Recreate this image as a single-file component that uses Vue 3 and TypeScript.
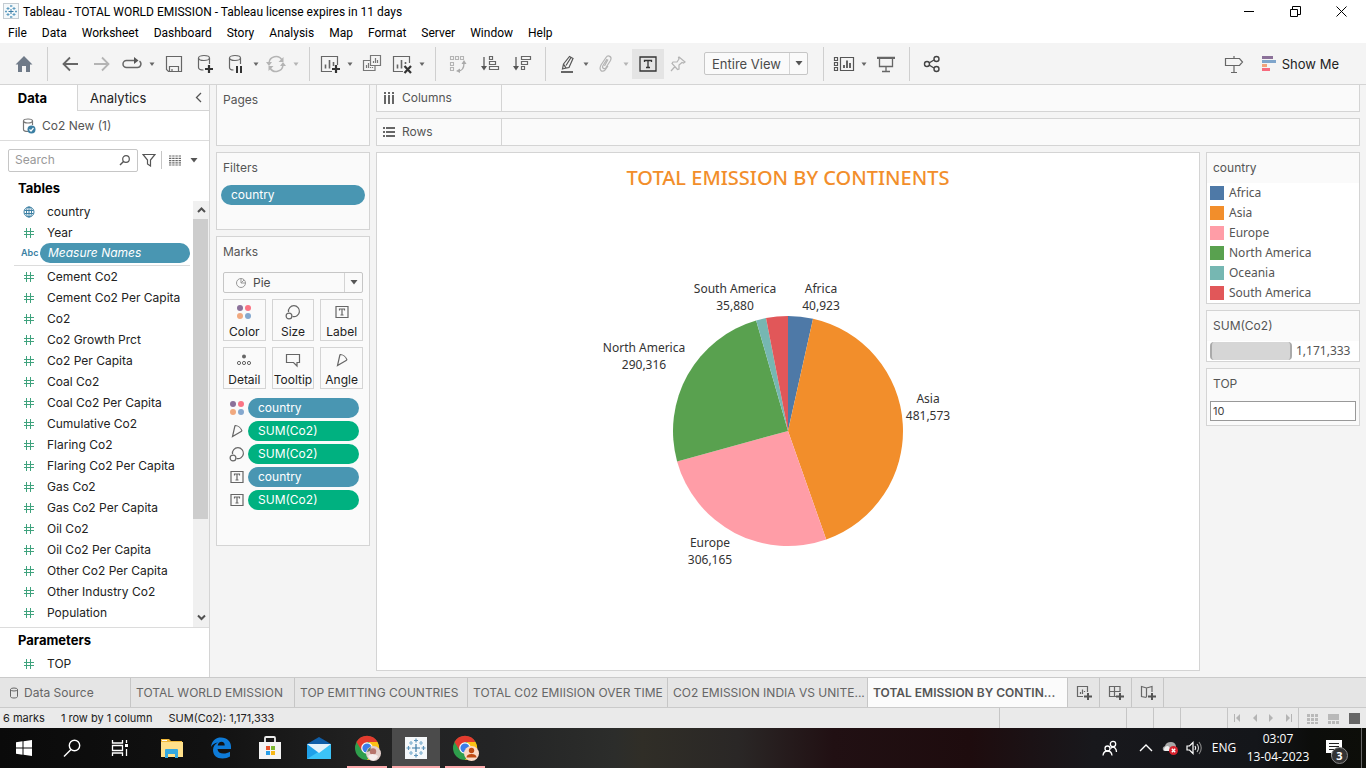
<script setup lang="ts">
import { h, ref } from 'vue'

const G = '#666666'
const icons: Record<string, string> = {
  logo: `<rect x=".5" y=".5" width="15" height="15" fill="#f4f8fa" stroke="#c4ccd2"/><g stroke="#3a7ca5"><path d="M8 6v5M5.500 8.500h5"/><path stroke="#5f9cc0" d="M8 2v2M7 3h2.500M8 13v2M7 14h2.500M3 7.500v2M2 8.500h2M13 7.500v2M12 8.500h2M5 4v3M3.500 5.500h3M11 4v3M9.500 5.500h3M5 10v3M3.500 11.500h3M11 10v3M9.500 11.500h3"/></g>`,
  home: `<path fill="#6f7a88" d="M10 2 18.500 10.500H16V18H12V12H8V18H4V10.500H1.500Z"/>`,
  back: `<path stroke="#666" stroke-width="1.800" d="M18 10H3M10 3.500 3.500 10l6.500 6.500"/>`,
  forward: `<path stroke="#b4b4b4" stroke-width="1.800" d="M2 10h15M10 3.500 16.500 10 10 16.500"/>`,
  replay: `<path stroke="#666" stroke-width="1.500" d="M7 6.500H4.500a3.500 3.500 0 0 0 0 7h11a3.500 3.500 0 0 0 2-6.300M6 6.500h8"/><path fill="#555" d="m12 3 4.500 3.500-4.500 3.500z"/>`,
  save: `<path stroke="#666" stroke-width="1.200" d="M2.500 2.500h15v15h-13l-2-2zM5.500 17.500v-5h9v5M8 17.500v-2.500"/>`,
  dbadd: `<path stroke="#666" stroke-width="1.200" d="M2.500 4v9.500c0 1.500 2 2.500 5 2.500M13.500 4v6"/><ellipse cx="8" cy="4" rx="5.500" ry="2.500" stroke="#666" stroke-width="1.200"/><path stroke="#333" stroke-width="2.200" d="M9 15h8M13 11v8"/>`,
  dbpause: `<path stroke="#666" stroke-width="1.200" d="M3.500 4v9.500c0 1.500 1 2.500 4 2.500M14.500 4v6"/><ellipse cx="9" cy="4" rx="5.500" ry="2.500" stroke="#666" stroke-width="1.200"/><path stroke="#333" stroke-width="2" d="M11 12v7M15 12v7"/>`,
  refresh: `<path stroke="#b4b4b4" stroke-width="1.500" d="M3 9a7 7 0 0 1 13-3M17 11a7 7 0 0 1-13 3"/><path fill="#b4b4b4" d="M17.500 3v5h-5zM2.500 17v-5h5zM0 8h6l-3 4zM14 12h6l-3-4z"/>`,
  sheetadd: `<path stroke="#666" stroke-width="1.200" d="M17.500 11V2.500H1.500v15H12"/><path stroke="#666" stroke-width="1.600" d="M5.500 14.500v-4M9.500 14.500V6M13.500 12V8"/><path stroke="#333" stroke-width="2.200" d="M12 15h8M16 11v8"/>`,
  sheetdup: `<path stroke="#777" stroke-width="1.200" d="M8.500 1.500h10v10h-10zM8 6.500H1.500v10H13V12M11.500 9V7M13.500 9V4M15.500 9V6M4.500 14v-3M6.500 14v-5M8.500 14v-1M10.500 14v-1"/>`,
  sheetclear: `<path stroke="#666" stroke-width="1.200" d="M17.500 9V2.500H1.500v15H11"/><path stroke="#666" stroke-width="1.600" d="M5.500 14.500v-4M9.500 14.500V6M13.500 10V8"/><path stroke="#333" stroke-width="2.200" d="m12.500 12 6.500 7M19 12l-6.500 7"/>`,
  swap: `<path stroke="#b4b4b4" stroke-width="1.100" d="M2.500 2.500h3v3h-3zM7.500 2.500h3v3h-3zM12.500 2.500h3v3h-3zM2.500 8.500h3v3h-3zM2.500 13.500h3v3h-3z"/><path stroke="#aaa" stroke-width="1.300" d="M10 17c4 0 6-3 6-8"/><path fill="#aaa" d="m16 6 2.500 4h-5zM8 17l4-2.500V19z"/>`,
  sortasc: `<path stroke="#666" stroke-width="1.400" d="M4 3v11"/><path fill="#555" d="M1 12h6l-3 4.500z"/><path stroke="#666" stroke-width="1.200" d="M9.500 2.500h3v3h-3zM9.500 7.500h6v3h-6zM9.500 12.500h9v3h-9z"/>`,
  sortdesc: `<path stroke="#666" stroke-width="1.400" d="M4 3v11"/><path fill="#555" d="M1 12h6l-3 4.500z"/><path stroke="#666" stroke-width="1.200" d="M9.500 2.500h9v3h-9zM9.500 7.500h6v3h-6zM9.500 12.500h3v3h-3z"/>`,
  pen: `<path stroke="#555" stroke-width="1.200" d="m7.500 10 6-7.500 3.500 2-4 9-3 .5zM7.500 10l-1 5 3.500-1M15 3.500l-5 8"/><path fill="#666" d="M5 17h12v2H5z"/>`,
  clip: `<path stroke="#b4b4b4" stroke-width="1.200" d="m11 5-4 6.500c-1.500 3 1.500 4 3 2l4.500-7c2-4-2.500-6-4.500-3L5 11c-2.500 5 1 8 4 5l3-4M12 5.500 8.500 12"/>`,
  label: `<path stroke="#333" stroke-width="1.300" d="M2 3h16v14H2z"/><path stroke="#333" stroke-width="1.300" d="M6.500 8V6.500h7V8M10 6.500v7M8 13.500h4"/>`,
  pin: `<path stroke="#b4b4b4" stroke-width="1.200" d="m11 3 6 5-1.500 1-1.500-.5-3 2.500v4l-1.500.5L4 9.500 5 8h4l2-3-.5-1.500zM7 12.500 3 17"/>`,
  cards: `<path stroke="#555" stroke-width="1.200" d="M1.500 3.500h3v3h-3zM1.500 8.500h3v3h-3zM1.500 13.500h3v3h-3zM7.500 3.500h13v13h-13z"/><path stroke="#555" stroke-width="1.800" d="M11 14v-3M14 14V6.500M17 14V9"/>`,
  present: `<path stroke="#666" stroke-width="1.300" d="M1 3.500h18M3.500 4v8.500h13V4M10 13v4M6 17.500h8"/><path stroke="#666" d="M1 4.500h18"/>`,
  share: `<g stroke="#444" stroke-width="1.400"><circle cx="5" cy="10" r="2.500"/><circle cx="14.500" cy="5" r="2.500"/><circle cx="14.500" cy="15" r="2.500"/><path d="m7 9 5-3M7 11l5 3"/></g>`,
  sign: `<path stroke="#666" stroke-width="1.200" d="M1.500 4.500h14l3 3.500-3 3.500h-14zM10 2v2.500M10 11.500V18M7 18.500h6"/>`,
  showme: `<path fill="#8b7199" d="M0 0h11v3H0z"/><path fill="#7fa5cb" d="M0 4h14v3H0z"/><path fill="#f1a37b" d="M0 8h5v3H0z"/><path fill="#f76b7e" d="M0 12h8v3H0z"/>`,
  caret: `<path fill="#666" d="M1.500 1.500h5L4 5z"/>`,
  caretoff: `<path fill="#b4b4b4" d="M1.500 1.500h5L4 5z"/>`,
  caretbig: `<path fill="#555" d="M.5 0h7L4 4.500z"/>`,
  db: `<path stroke="#777" stroke-width="1.200" d="M1.500 3v8.500c0 1 1.500 2 4.500 2M10.500 3v4"/><ellipse cx="6" cy="3" rx="4.500" ry="2" stroke="#777" stroke-width="1.200"/><circle cx="9.500" cy="11.500" r="4" fill="#3b7fa3"/><path stroke="#fff" stroke-width="1.200" d="m7.500 11.500 1.500 1.500 2.500-3"/>`,
  search: `<circle cx="7" cy="4" r="3.300" stroke="#555" stroke-width="1.200"/><path stroke="#555" stroke-width="1.500" d="M4.500 6.500 1 10"/>`,
  funnel: `<path stroke="#555" stroke-width="1.200" d="M1 1.500h12L8.500 7v6L5.500 11V7z"/>`,
  grid: `<path stroke="#666" stroke-width="1.200" stroke-dasharray="2.400 .8" d="M0 1h12M0 3.300h12M0 5.600h12M0 7.900h12M0 10h12"/>`,
  globe: `<g stroke="#3b7fa3"><circle cx="6" cy="6" r="5"/><ellipse cx="6" cy="6" rx="2.500" ry="5"/><path d="M1.500 4.500h9M1.500 7.500h9M6 1v10"/></g>`,
  hash: `<path stroke="#3fa27d" d="M3.500 1v10M7.500 1v10M1 4.500h10M1 7.500h10"/>`,
  cols: `<path fill="${G}" d="M1 1h2v2H1zM1 4h2v9H1zM5 1h2v2H5zM5 4h2v9H5zM9 1h2v2H9zM9 4h2v9H9z"/>`,
  rows: `<path fill="${G}" d="M0 1h2v2H0zM3 1h9v2H3zM0 5h2v2H0zM3 5h9v2H3zM0 9h2v2H0zM3 9h9v2H3z"/>`,
  pie: `<circle cx="6" cy="6" r="4.500" stroke="#999"/><path stroke="#999" d="M6 1.500V6h4.500M6 6l3-3"/>`,
  color: `<circle cx="4" cy="4" r="3" fill="#8b7199"/><circle cx="12" cy="4" r="3" fill="#fb7484"/><circle cx="4" cy="12" r="3" fill="#f1a97f"/><circle cx="12" cy="12" r="3" fill="#85a8ce"/>`,
  size: `<g stroke="${G}" stroke-width="1.200"><path d="M3.500 8a5.500 5.500 0 1 1 4 4.500"/><circle cx="4" cy="12" r="2.900"/></g>`,
  text: `<path stroke="${G}" stroke-width="1.200" d="M2 2.500h12v11H2z"/><path stroke="${G}" stroke-width="1.200" d="M5.500 6.500V5h5v1.500M8 5v6M6.500 11h3"/>`,
  detail: `<circle cx="8" cy="4.500" r="2" fill="${G}"/><g stroke="${G}"><circle cx="3" cy="11" r="1.600"/><circle cx="8" cy="11" r="1.600"/><circle cx="13" cy="11" r="1.600"/></g>`,
  tooltip: `<path stroke="${G}" stroke-width="1.200" d="M1.500 2.500h13v8H12V14l-3.500-3.500h-7z"/>`,
  angle: `<path stroke="${G}" stroke-width="1.200" d="M6 2.500 3.500 13.500 13 8M6 2.500c3 0 6 2.500 7 5.500"/>`,
  source: `<path stroke="#666" d="M1.500 2.500v7c0 2 7 2 7 0v-7"/><ellipse cx="5" cy="2.500" rx="3.500" ry="1.500" stroke="#666"/>`,
  newsheet: `<path stroke="#666" stroke-width="1.200" d="M11.500 7V1.500h-10v10H7M4.500 9V7M6.500 9V4.500M8.500 7V6"/><path stroke="#555" stroke-width="2" d="M8 11.500h8M12 8v7"/>`,
  newdash: `<path stroke="#666" stroke-width="1.200" d="M12 7V1.500H1.500v10H8M6.500 1.500v10M1.500 6.500H12"/><path stroke="#555" stroke-width="2" d="M8 11.500h8M12 8v7"/>`,
  newstory: `<path stroke="#666" stroke-width="1.200" d="M12 7V1.500L6.500 3 1.500 1.500v10l5 1M6.500 3v9"/><path stroke="#555" stroke-width="2" d="M8 11.500h8M12 8v7"/>`,
  first: `<path fill="#b4b4b4" d="M1 2h1v8H1zM7 2v8L3 6z"/>`,
  prev: `<path fill="#b4b4b4" d="M8 2v8L4 6z"/>`,
  next: `<path fill="#b4b4b4" d="M4 2v8l4-4z"/>`,
  last: `<path fill="#b4b4b4" d="M10 2h1v8h-1zM5 2v8l4-4z"/>`,
  tiles: `<path fill="#b9b9b9" d="M0 1h3v3H0zM4 1h3v3H4zM8 1h3v3H8zM0 5h3v3H0zM4 5h3v3H4zM8 5h3v3H8zM0 9h3v2H0zM4 9h3v2H4zM8 9h3v2H8z"/>`,
  film: `<path fill="#b9b9b9" d="M0 1h11v6H0zM0 8h3v3H0zM4 8h3v3H4zM8 8h3v3H8z"/>`,
  single: `<path fill="#666" d="M0 0h11v11H0z"/>`,
  win: `<path fill="#fff" d="m4 6.300 6.500-1v6.200H4zM11.500 5.200 20 4v7.500h-8.500zM4 12.500h6.500v6.200L4 17.700zM11.500 12.500H20V20l-8.500-1.200z"/>`,
  tsearch: `<circle cx="14.500" cy="9.500" r="5.200" stroke="#fff" stroke-width="1.400"/><path stroke="#fff" stroke-width="1.400" d="M11 13.500 4 20.500"/>`,
  taskview: `<path stroke="#fff" stroke-width="1.300" d="M4.500 4v3h10V4M4.500 20v-3h10v3M4.500 9.500h10v5h-10zM18.500 4v3M18.500 13v7"/><path fill="#fff" d="M17 8h3v3h-3z"/>`,
  folder: `<path fill="#f0b83a" d="M1 3h8l2 2h11v3H1z"/><path fill="#ffe08a" d="M1 6h22v15H1z"/><path fill="#35a9e0" d="M5 14q0-1 1-1h11q1 0 1 1v8h-3v-4H8v4H5z"/><path fill="#fff" d="M2 4h5v1H2z"/>`,
  edge: `<path fill="#0e7bd8" d="M2 11C3 4 7 1.500 12 1.500c6 0 10 4 10 9V13H8.500c.3 3 2.500 4.500 6 4.500 2.500 0 4.500-.7 6.500-1.800v4.800c-2 1.200-4.500 2-7.500 2C7.500 22.500 4 19 4 14c0-3.500 2-6 5-7.500C5.500 7 3.500 8.500 2 11zM8.700 9.500h7C15.800 7 14.500 5.800 12.500 5.800S9 7.200 8.700 9.500z"/>`,
  store: `<path stroke="#eee" stroke-width="1.800" d="M7 6V2q0-1 1-1h8q1 0 1 1v4"/><path fill="#f4f4f4" d="M1 6h22v17H1z"/><path fill="#e8532b" d="M8 10h4v4H8z"/><path fill="#7db72f" d="M13 10h4v4h-4z"/><path fill="#2a9fe8" d="M8 15h4v4H8z"/><path fill="#f8b817" d="M13 15h4v4h-4z"/>`,
  mail: `<path fill="#0f5ea8" d="M0 8 12 1l12 7v3H0z"/><path fill="#1fa0e8" d="M0 8v15h24V8z"/><path fill="#3cc3f7" d="M24 8v15H0z"/><path fill="#e4f2fa" d="m0 8 12 9L24 8z"/>`,
  chrome: `<circle cx="12" cy="13" r="12" fill="#2f9e4c"/><path fill="#e33b2e" d="M1.500 7A12 12 0 0 1 22.500 7H12L7 16z"/><path fill="#fbc116" d="M22.500 7A12 12 0 0 1 12 25l6-9L14 7z"/><circle cx="12" cy="13" r="5.800" fill="#fff"/><circle cx="12" cy="13" r="4.600" fill="#3b7de9"/>`,
  face: `<circle cx="18.500" cy="18.500" r="7.500" fill="#e3cfcb"/><circle cx="18" cy="16.500" r="3.200" fill="#b8746c"/><path fill="#f6eeee" d="M13 21q4-4 10 0-2 4.500-5 4.500T13 21z"/><path fill="#5d7f55" d="M12 17q1-4 4-5l-1 4z"/>`,
  user: `<circle cx="18.500" cy="18.500" r="7.500" fill="#fbd9c6"/><circle cx="18.500" cy="15.500" r="2.700" fill="#bf4a12"/><path fill="#bf4a12" d="M13.500 22.500q0-3.500 5-3.500t5 3.500z"/>`,
  tabtask: `<path fill="#f5f8fa" d="M1 1h22v22H1z"/><g stroke="#3979a5" stroke-width="1.200"><path d="M12 8v8M8 12h8"/><g stroke="#5b93ba"><path d="M12 2.500v4M10 4.500h4M12 17.500v4M10 19.500h4M4.500 10v4M2.500 12h4M19.500 10v4M17.500 12h4"/></g><g stroke="#7fb0cf"><path d="M7 5v4M5 7h4M17 5v4M15 7h4M7 15v4M5 17h4M17 15v4M15 17h4"/></g></g>`,
  people: `<g stroke="#fff" stroke-width="1.300"><circle cx="11" cy="4" r="2.700"/><path d="M8.500 8.500Q11 6 13 8q1.500 1.500 1.500 4"/><circle cx="5.500" cy="8.500" r="2.500"/><path d="M1 15.500q.5-4.500 4.500-4.500t4.500 4.500"/></g>`,
  up: `<path stroke="#fff" stroke-width="1.400" d="m2 11 6-6 6 6"/>`,
  cloud: `<path fill="#a8a8a8" d="M1 10q-1-3 2-4 1-4 6-4 4 0 5 4v5H2z"/><path fill="#eee" d="M2 10q0-4 4-4l6 5H3z"/><circle cx="11.500" cy="10.500" r="4.500" fill="#d8222e"/><path stroke="#fff" stroke-width="1.400" d="m9.800 8.800 3.400 3.400M13.200 8.800l-3.400 3.400"/>`,
  volume: `<path stroke="#fff" stroke-width="1.200" d="M1 6h2.500L7 2.500v11L3.500 10H1zM9 6q1.500 2 0 4"/><path stroke="#ccc" stroke-width="1.100" d="M11 4q3 4 0 8"/><path stroke="#888" stroke-width="1.100" d="M13 2q4.500 6 0 12"/>`,
  note: `<path fill="#fff" d="M0 0h16v13H9l-4 4v-4H0z"/><path stroke="#222" stroke-width="1.200" d="M3 3.500h10M3 6.500h10M3 9.500h8"/>`,
  minimize: `<path stroke="#000" d="M0 5.500h10"/>`,
  restore: `<path stroke="#000" d="M.5 3.500h7v7h-7zM2.500 3V.5h8v8H8"/>`,
  close: `<path stroke="#000" d="m.5.500 10 10M10.500.500l-10 10"/>`,
  chevleft: `<path stroke="#555" stroke-width="1.300" d="M6 1 1.500 5.500 6 10"/>`,
  sbup: `<path stroke="#505050" stroke-width="2" d="M1 6 4.500 2.500 8 6"/>`,
  sbdown: `<path stroke="#505050" stroke-width="2" d="M1 1.500 4.500 5 8 1.500"/>`,
}

interface IconProps { name: string; w?: number; h?: number }
const Icon = (p: IconProps) => {
  const w = p.w ?? 20
  const ht = p.h ?? w
  return h('svg', { width: w, height: ht, viewBox: `0 0 ${w} ${ht}`, fill: 'none', 'aria-hidden': 'true', innerHTML: icons[p.name] })
}
Icon.props = ['name', 'w', 'h']

const menus = ['File', 'Data', 'Worksheet', 'Dashboard', 'Story', 'Analysis', 'Map', 'Format', 'Server', 'Window', 'Help']

interface Tool { icon: string; label: string; split?: 'caret' | 'caretoff' }
const toolGroups: Tool[][] = [
  [
    { icon: 'back', label: 'Undo' }, { icon: 'forward', label: 'Redo' },
    { icon: 'replay', label: 'Replay', split: 'caret' }, { icon: 'save', label: 'Save' },
    { icon: 'dbadd', label: 'New data source' }, { icon: 'dbpause', label: 'Pause updates', split: 'caret' },
    { icon: 'refresh', label: 'Refresh', split: 'caretoff' },
  ],
  [
    { icon: 'sheetadd', label: 'New worksheet', split: 'caret' }, { icon: 'sheetdup', label: 'Duplicate' },
    { icon: 'sheetclear', label: 'Clear sheet', split: 'caret' },
  ],
  [{ icon: 'swap', label: 'Swap' }, { icon: 'sortasc', label: 'Sort ascending' }, { icon: 'sortdesc', label: 'Sort descending' }],
]

const measures = ['Cement Co2', 'Cement Co2 Per Capita', 'Co2', 'Co2 Growth Prct', 'Co2 Per Capita', 'Coal Co2', 'Coal Co2 Per Capita',
  'Cumulative Co2', 'Flaring Co2', 'Flaring Co2 Per Capita', 'Gas Co2', 'Gas Co2 Per Capita', 'Oil Co2', 'Oil Co2 Per Capita',
  'Other Co2 Per Capita', 'Other Industry Co2', 'Population']

const markButtons = [['color', 'Color'], ['size', 'Size'], ['text', 'Label'], ['detail', 'Detail'], ['tooltip', 'Tooltip'], ['angle', 'Angle']]
const markPills = [
  { icon: 'color', text: 'country', dim: true }, { icon: 'angle', text: 'SUM(Co2)', dim: false },
  { icon: 'size', text: 'SUM(Co2)', dim: false }, { icon: 'text', text: 'country', dim: true },
  { icon: 'text', text: 'SUM(Co2)', dim: false },
]

interface Slice { name: string; value: number; color: string; label?: [number, number] }
const slices: Slice[] = [
  { name: 'Africa', value: 40923, color: '#4e79a7', label: [253, 42] },
  { name: 'Asia', value: 481573, color: '#f28e2b', label: [360, 152] },
  { name: 'Europe', value: 306165, color: '#ff9da7', label: [142, 296] },
  { name: 'North America', value: 290316, color: '#59a14f', label: [76, 101] },
  { name: 'Oceania', value: 16476, color: '#76b7b2' },
  { name: 'South America', value: 35880, color: '#e15759', label: [167, 42] },
]
const total = slices.reduce((s, d) => s + d.value, 0)
const CX = 220, CY = 180, R = 115
let turn = 0
const wedges = slices.map((d) => {
  const a = turn * 2 * Math.PI
  turn += d.value / total
  const b = turn * 2 * Math.PI
  const at = (t: number) => `${(CX + R * Math.sin(t)).toFixed(2)} ${(CY - R * Math.cos(t)).toFixed(2)}`
  return { ...d, path: `M${CX} ${CY}L${at(a)}A${R} ${R} 0 ${b - a > Math.PI ? 1 : 0} 1 ${at(b)}Z` }
})
const fmt = (n: number) => n.toLocaleString('en-US')

const sheets = ['TOTAL WORLD EMISSION', 'TOP EMITTING COUNTRIES', 'TOTAL C02 EMIISION OVER TIME', 'CO2 EMISSION INDIA VS UNITE...', 'TOTAL EMISSION BY CONTIN...']
const active = ref(sheets[4])
const fit = ref('Entire View')
const mark = ref('Pie')
const top = ref('10')
const query = ref('')
const apps = [['folder', 'File Explorer'], ['edge', 'Edge'], ['store', 'Store'], ['mail', 'Mail']]
</script>

<template>
  <div class="app">
    <header class="titlebar">
      <Icon name="logo" :w="17" />
      <span class="wtitle">Tableau - TOTAL WORLD EMISSION - Tableau license expires in 11 days</span>
      <button class="wbtn" aria-label="Minimize"><Icon name="minimize" :w="11" /></button>
      <button class="wbtn" aria-label="Restore"><Icon name="restore" :w="11" /></button>
      <button class="wbtn" aria-label="Close"><Icon name="close" :w="11" /></button>
    </header>
    <nav class="menubar">
      <button v-for="m in menus" :key="m">{{ m }}</button>
    </nav>

    <div class="toolbar">
      <div class="group first"><button class="tool" aria-label="Home"><Icon name="home" /></button></div>
      <div v-for="(g, i) in toolGroups" :key="i" class="group">
        <template v-for="t in g" :key="t.icon">
          <button class="tool" :class="{ split: t.split }" :aria-label="t.label"><Icon :name="t.icon" /></button>
          <button v-if="t.split" class="more" :aria-label="t.label + ' options'"><Icon :name="t.split" :w="8" :h="6" /></button>
        </template>
      </div>
      <div class="group wide">
        <button class="tool split" aria-label="Highlight"><Icon name="pen" /></button>
        <button class="more" aria-label="Highlight options"><Icon name="caret" :w="8" :h="6" /></button>
        <button class="tool split" aria-label="Group members"><Icon name="clip" /></button>
        <button class="more" aria-label="Group options"><Icon name="caretoff" :w="8" :h="6" /></button>
        <button class="tool on" aria-label="Show mark labels"><Icon name="label" /></button>
        <button class="tool split" aria-label="Fix axes"><Icon name="pin" /></button>
        <div class="drop fit">
          <select v-model="fit" aria-label="Fit"><option>Entire View</option><option>Standard</option></select>
          <span class="arrow"><Icon name="caretbig" :w="8" :h="5" /></span>
        </div>
      </div>
      <div class="group">
        <button class="tool split" aria-label="Show cards"><Icon name="cards" :w="22" :h="20" /></button>
        <button class="more" aria-label="Card options"><Icon name="caret" :w="8" :h="6" /></button>
        <button class="tool" aria-label="Presentation mode"><Icon name="present" /></button>
      </div>
      <div class="group end"><button class="tool" aria-label="Share"><Icon name="share" /></button></div>
      <button class="tool guide" aria-label="Guide"><Icon name="sign" /></button>
      <button class="showme"><Icon name="showme" :w="14" :h="15" />Show Me</button>
    </div>

    <main class="work">
      <aside class="data">
        <div class="dtabs">
          <button class="dtab sel">Data</button>
          <button class="dtab">Analytics<Icon name="chevleft" :w="7" :h="11" /></button>
        </div>
        <div class="dsource"><Icon name="db" :w="14" :h="16" />Co2 New (1)</div>
        <div class="find">
          <div class="box">
            <input v-model="query" type="text" placeholder="Search" aria-label="Search fields" />
            <Icon name="search" :w="12" :h="11" />
          </div>
          <button class="fbtn" aria-label="Filter fields"><Icon name="funnel" :w="14" /></button>
          <button class="fbtn listing" aria-label="List options"><Icon name="grid" :w="12" :h="11" /><Icon name="caretbig" :w="8" :h="5" /></button>
        </div>
        <h2>Tables</h2>
        <div class="tables">
          <ul class="fields">
            <li><Icon name="globe" :w="12" />country</li>
            <li><Icon name="hash" :w="12" />Year</li>
            <li class="names"><span class="abc">Abc</span><span class="pill">Measure Names</span></li>
            <li v-for="m in measures" :key="m"><Icon name="hash" :w="12" />{{ m }}</li>
          </ul>
          <div class="sbar">
            <span class="sb"><Icon name="sbup" :w="9" :h="8" /></span>
            <span class="thumb"></span>
            <span class="sb"><Icon name="sbdown" :w="9" :h="8" /></span>
          </div>
        </div>
        <div class="params">
          <h2>Parameters</h2>
          <ul class="fields"><li><Icon name="hash" :w="12" />TOP</li></ul>
        </div>
      </aside>

      <div class="shelves">
        <section class="card pages"><h3>Pages</h3></section>
        <section class="card filters"><h3>Filters</h3><span class="pill">country</span></section>
        <section class="card marks">
          <h3>Marks</h3>
          <div class="drop mark">
            <Icon name="pie" :w="12" />
            <select v-model="mark" aria-label="Mark type"><option>Pie</option><option>Bar</option></select>
            <span class="arrow"><Icon name="caretbig" :w="8" :h="5" /></span>
          </div>
          <div class="mbtns">
            <button v-for="b in markButtons" :key="b[1]"><Icon :name="b[0]" :w="16" />{{ b[1] }}</button>
          </div>
          <div v-for="(p, i) in markPills" :key="i" class="mrow">
            <Icon :name="p.icon" :w="16" /><span class="pill" :class="{ green: !p.dim }">{{ p.text }}</span>
          </div>
        </section>
      </div>

      <div class="sheet">
        <div class="card shelf"><span class="sname"><Icon name="cols" :w="12" :h="14" />Columns</span></div>
        <div class="card shelf"><span class="sname"><Icon name="rows" :w="12" />Rows</span></div>
        <div class="viewrow">
          <section class="view">
            <h1>TOTAL EMISSION BY CONTINENTS</h1>
            <svg class="chart" width="440" height="360" viewBox="0 0 440 360" role="img" aria-label="Emission by continent">
              <path v-for="w in wedges" :key="w.name" :d="w.path" :fill="w.color" />
              <template v-for="w in wedges" :key="w.name">
                <text v-if="w.label" :x="w.label[0]" :y="w.label[1]">{{ w.name }}</text>
                <text v-if="w.label" :x="w.label[0]" :y="w.label[1] + 17">{{ fmt(w.value) }}</text>
              </template>
            </svg>
          </section>
          <aside class="legends">
            <section class="card legend">
              <h3>country</h3>
              <ul>
                <li v-for="s in slices" :key="s.name">
                  <svg width="14" height="14" aria-hidden="true"><rect width="14" height="14" :fill="s.color" /></svg>{{ s.name }}
                </li>
              </ul>
            </section>
            <section class="card legend">
              <h3>SUM(Co2)</h3>
              <div class="sizes"><span class="range"></span>{{ fmt(total) }}</div>
            </section>
            <section class="card legend param">
              <h3><label for="top">TOP</label></h3>
              <input id="top" v-model="top" type="text" />
            </section>
          </aside>
        </div>
      </div>
    </main>

    <nav class="tabs">
      <button class="src"><Icon name="source" :w="10" :h="12" />Data Source</button>
      <button v-for="s in sheets" :key="s" :class="{ sel: s === active }" @click="active = s">{{ s }}</button>
      <button class="new" aria-label="New worksheet"><Icon name="newsheet" :w="16" /></button>
      <button class="new" aria-label="New dashboard"><Icon name="newdash" :w="16" /></button>
      <button class="new" aria-label="New story"><Icon name="newstory" :w="16" /></button>
    </nav>
    <footer class="status">
      <span>6 marks</span><span>1 row by 1 column</span><span>SUM(Co2): {{ fmt(total) }}</span>
      <div class="cells">
        <i></i><i></i><i></i><i></i>
        <div class="navs">
          <button v-for="n in ['first', 'prev', 'next', 'last']" :key="n" :aria-label="n"><Icon :name="n" :w="12" /></button>
        </div>
        <div class="modes">
          <button v-for="n in ['tiles', 'film', 'single']" :key="n" :aria-label="n"><Icon :name="n" :w="11" /></button>
        </div>
      </div>
    </footer>

    <footer class="taskbar">
      <button class="sys" aria-label="Start"><Icon name="win" :w="24" /></button>
      <button class="sys" aria-label="Search"><Icon name="tsearch" :w="24" /></button>
      <button class="sys" aria-label="Task view"><Icon name="taskview" :w="24" /></button>
      <div class="apps">
        <button v-for="a in apps" :key="a[0]" :aria-label="a[1]"><Icon :name="a[0]" :w="24" /></button>
        <button class="run" aria-label="Chrome"><span class="stack"><Icon name="chrome" :w="26" /><Icon name="face" :w="26" /></span></button>
        <button class="run cur" aria-label="Tableau"><Icon name="tabtask" :w="24" /></button>
        <button class="run" aria-label="Chrome profile"><span class="stack"><Icon name="chrome" :w="26" /><Icon name="user" :w="26" /></span></button>
      </div>
      <div class="tray">
        <button class="people" aria-label="People"><Icon name="people" :w="16" /></button>
        <button aria-label="Hidden icons"><Icon name="up" :w="16" /></button>
        <button aria-label="OneDrive"><Icon name="cloud" :w="16" /></button>
        <button aria-label="Volume"><Icon name="volume" :w="16" /></button>
        <span class="lang">ENG</span>
        <span class="clock"><span>03:07</span><span>13-04-2023</span></span>
        <button class="notes" aria-label="Notifications"><Icon name="note" :w="16" :h="17" /><b>3</b></button>
        <span class="desk"></span>
      </div>
    </footer>
  </div>
</template>

<style>
html, body { margin: 0; background: #f4f4f4; }
</style>

<style scoped>
.app { min-height: 100vh; display: flex; flex-direction: column; background: #f4f4f4; color: #222; font: 12px/16px Inter, "Liberation Sans", sans-serif; }
* { box-sizing: border-box; }
svg { flex: none; display: block; }
button { border: 0; background: none; padding: 0; margin: 0; font: inherit; color: inherit; display: flex; align-items: center; justify-content: center; }
ul { list-style: none; margin: 0; padding: 0; }
h1, h2, h3 { margin: 0; font-weight: 400; }

.titlebar { height: 23px; background: #fff; display: flex; align-items: center; padding: 0 2px 0 3px; font: 12px/16px Roboto, "Noto Sans", sans-serif; color: #000; }
.wtitle { flex: 1; margin-left: 3px; }
.wbtn { width: 46px; height: 20px; }
.menubar { height: 20px; background: #fff; display: flex; padding-left: 8px; gap: 15px; font: 12px/20px Roboto, "Noto Sans", sans-serif; color: #000; }

.toolbar { height: 42px; display: flex; align-items: center; border-bottom: 1px solid #d4d4d4; }
.group { height: 34px; display: flex; align-items: center; padding: 0 7px 0 6px; border-right: 1px solid #cfcfcf; }
.group.first { padding: 0 7px 0 8px; }
.group.wide { padding-right: 15px; }
.group.end { border: 0; flex: 1; }
.tool { width: 32px; height: 30px; flex: none; }
.tool.split { width: 28px; }
.tool.on { background: #e4e4e4; }
.more { width: 12px; height: 30px; }
.drop { display: flex; align-items: center; border: 1px solid #c6c6c6; border-radius: 2px; background: #fafafa; }
.drop select { flex: 1; min-width: 0; align-self: stretch; border: 0; background: none; appearance: none; font: inherit; color: #4b4b4b; padding: 0; outline: 0; }
.arrow { width: 18px; align-self: stretch; border-left: 1px solid #d4d4d4; display: flex; align-items: center; justify-content: center; }
.fit { width: 104px; height: 23px; margin-left: 12px; font-size: 13px; }
.fit select { padding-left: 7px; }
.guide { width: 30px; margin-right: 13px; }
.showme { gap: 6px; margin-right: 27px; font-size: 13px; color: #222; }

.work { flex: 1; display: flex; min-height: 0; }
.data { width: 210px; flex: none; background: #fff; border-right: 1px solid #d4d4d4; display: flex; flex-direction: column; }
.dtabs { display: flex; height: 26px; font-size: 13px; }
.dtab { color: #222; }
.dtab.sel { width: 77px; padding-right: 12px; font-weight: 700; color: #000; }
.dtab:not(.sel) { flex: 1; justify-content: space-between; padding: 0 7px 0 12px; background: #f9f9f9; border-left: 1px solid #d4d4d4; border-bottom: 1px solid #d4d4d4; }
.dsource { height: 30px; display: flex; align-items: center; gap: 6px; padding-left: 22px; border-bottom: 1px solid #dcdcdc; color: #555; }
.find { display: flex; align-items: center; height: 38px; padding-left: 8px; }
.box { width: 130px; height: 23px; display: flex; align-items: center; border: 1px solid #c6c6c6; border-radius: 2px; padding: 0 6px; }
.box input { flex: 1; min-width: 0; border: 0; outline: 0; padding: 0; font: inherit; background: none; }
.box input::placeholder { color: #999; opacity: 1; }
.fbtn { width: 23px; height: 18px; padding-right: 2px; }
.fbtn.listing { width: 37px; gap: 9px; padding: 0; border-left: 1px solid #c6c6c6; justify-content: flex-end; }
h2 { font-size: 13px; line-height: 18px; font-weight: 700; color: #000; padding-left: 18px; }
.tables { flex: 1; display: flex; min-height: 0; margin-top: 4px; border-bottom: 1px solid #dcdcdc; }
.fields { flex: 1; }
.fields li { height: 21px; display: flex; align-items: center; gap: 12px; padding-left: 23px; white-space: nowrap; }
.fields .names { height: 23px; gap: 2px; padding-left: 21px; margin: 0 3px 0 0; align-items: flex-start; border-bottom: 1px solid #dcdcdc; border-image: linear-gradient(90deg, transparent 15px, #dcdcdc 15px) 1; }
.names .pill { flex: 1; padding-left: 8px; font-style: italic; height: 20px; }
.abc { width: 17px; font-size: 9px; line-height: 20px; font-weight: 600; color: #3b7fa3; }
.pill { display: block; height: 20px; line-height: 20px; border-radius: 10px; background: #4996b2; color: #fff; padding-left: 10px; }
.pill.green { background: #00b180; }
.sbar { width: 16px; display: flex; flex-direction: column; background: #f0f0f0; }
.sb { height: 18px; display: flex; align-items: center; justify-content: center; }
.thumb { height: 300px; background: #cdcdcd; margin: 0 1px 0 0; }
.sb:last-child { margin-top: auto; }
.params { height: 49px; padding-top: 3px; }
.params .fields { padding-top: 4px; }

.shelves { width: 154px; margin: 0 6px; flex: none; display: flex; flex-direction: column; gap: 6px; }
.card { background: #fafafa; border: 1px solid #d4d4d4; }
h3 { font-size: 12px; line-height: 16px; color: #555; padding: 7px 6px; }
.pages { height: 61px; border-top: 0; }
.filters { height: 78px; }
.filters .pill { margin: 2px 4px; }
.marks { height: 310px; }
.mark { margin: 5px 6px 6px; height: 21px; padding-left: 11px; gap: 6px; }
.mbtns { display: grid; grid-template-columns: repeat(3, 1fr); gap: 6px; padding: 0 6px; margin-bottom: 9px; }
.mbtns button { height: 42px; flex-direction: column; border: 1px solid #d4d4d4; gap: 4px; padding-top: 3px; }
.mrow { display: flex; align-items: center; gap: 3px; padding: 0 10px 0 12px; margin-bottom: 3px; }
.mrow .pill { flex: 1; }

.sheet { flex: 1; min-width: 0; display: flex; flex-direction: column; gap: 6px; padding: 0 6px 6px 0; }
.shelf { height: 28px; display: flex; }
.shelf:first-child { height: 27px; border-top: 0; }
.sname { width: 125px; border-right: 1px solid #d4d4d4; display: flex; align-items: center; gap: 7px; padding-left: 6px; color: #555; }
.viewrow { flex: 1; display: flex; gap: 6px; }
.view { flex: 1; background: #fff; border: 1px solid #d4d4d4; display: flex; flex-direction: column; align-items: center; }
h1 { font: 500 20px/28px "Noto Sans", "Open Sans", sans-serif; color: #f28e2b; margin-top: 11px; }
.chart { margin: auto; font: 12px "Noto Sans", sans-serif; fill: #333; }
.chart text { text-anchor: middle; }
.legends { width: 154px; display: flex; flex-direction: column; gap: 6px; }
.legend { font: 12px/16px "Noto Sans", sans-serif; color: #555; }
.legend h3 { font-family: Inter, sans-serif; }
.legend ul { background: #fff; }
.legend li { height: 20px; display: flex; align-items: center; gap: 5px; padding-left: 3px; }
.sizes { background: #fff; height: 20px; display: flex; align-items: center; gap: 4px; padding-left: 3px; }
.range { width: 82px; height: 18px; background: #d6d6d6; border: solid #aaa; border-width: 0 2px; border-radius: 4px; }
.param { height: 58px; }
.param input { display: block; width: 146px; height: 20px; margin: 2px 3px; padding: 0 2px; border: 1px solid #999; font: 11px Inter, sans-serif; color: #444; }

.tabs { height: 31px; display: grid; grid-template-columns: 131px 164px 173px 200px 200px 200px 32px 32px 32px 1fr; background: #e5e5e5; border-top: 1px solid #cacaca; border-bottom: 1px solid #cacaca; color: #666; }
.tabs button { border-right: 1px solid #c6c6c6; padding: 0 0 0 5px; justify-content: flex-start; white-space: nowrap; }
.tabs .src { padding-left: 9px; gap: 5px; }
.tabs .sel { background: #fbfbfb; font-weight: 600; color: #555; }
.tabs .new { justify-content: center; padding: 0; }

.status { height: 20px; display: flex; align-items: center; gap: 16px; background: #eaeaea; padding-left: 3px; font-size: 11px; color: #222; }
.cells { margin-left: auto; align-self: stretch; display: grid; grid-template-columns: 127px 27px 27px 47px 71px 68px; }
.cells > * { border-left: 1px solid #c6c6c6; }
.navs { display: flex; align-items: center; justify-content: center; gap: 4px; }
.modes { display: flex; align-items: center; justify-content: flex-end; gap: 10px; padding-right: 6px; }

.taskbar { height: 40px; display: flex; color: #fff; font: 12px/16px "Open Sans", "Noto Sans", sans-serif; background: linear-gradient(90deg, #0a0a0a 0, #111 15%, #222 27%, #232425 36%, #2c2d2b 45%, #302e27 47%, #2a2726 54%, #211013 61%, #1e0c0e 71%, #18181c 80%, #14161a 92%, #0c0d0b 96%, #0d0e09 100%); }
.sys { width: 48px; }
.apps { display: flex; margin-left: 3px; flex: 1; }
.apps button { width: 49px; }
.apps .run { border-bottom: 2px solid #fba9ab; width: 40px; margin: 0 5px 0 4px; padding: 2px 0 0 2px; }
.apps .run.cur { width: 48px; margin: 0 1px 0 0; padding-left: 0; background: #4b4b4b; }
.stack { display: grid; }
.stack > * { grid-area: 1 / 1; }
.tray { display: flex; align-items: center; }
.tray button { width: 24px; height: 40px; }
.tray .people { margin-right: 12px; }
.lang { width: 36px; text-align: center; }
.clock { width: 66px; margin: 0 3px; display: flex; flex-direction: column; align-items: center; gap: 2px; }
.tray .notes { position: relative; width: 40px; margin-right: 7px; }
.notes b { position: absolute; left: 17px; top: 19px; width: 17px; height: 17px; border-radius: 9px; border: 1px solid #888; background: #333; font-size: 11px; line-height: 15px; text-align: center; }
.desk { width: 5px; height: 40px; border-left: 1px solid #666; }
</style>
